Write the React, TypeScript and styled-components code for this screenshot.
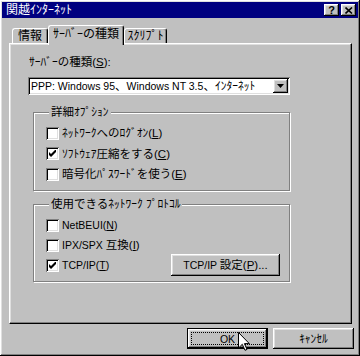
import styled, { createGlobalStyle } from "styled-components";

const GlobalStyle = createGlobalStyle`
  html, body { margin: 0; padding: 0; background: #c0c0c0; }
  body {
    font-family: "Liberation Sans", "Noto Sans CJK JP", sans-serif;
    font-size: 11.5px;
    color: #000;
  }
`;

const raised = `
  box-shadow: inset -1px -1px #000, inset 1px 1px #fff, inset -2px -2px #808080, inset 2px 2px #dfdfdf;
`;
const sunken = `
  box-shadow: inset 1px 1px #808080, inset -1px -1px #fff, inset 2px 2px #000, inset -2px -2px #dfdfdf;
`;

const Window = styled.div`
  width: 360px;
  height: 356px;
  box-sizing: border-box;
  padding: 2px;
  background: #c0c0c0;
  ${raised}
  display: flex;
  flex-direction: column;
`;

const TitleBar = styled.div`
  height: 16px;
  display: flex;
  align-items: center;
  padding: 0 2px;
  background: #000080;
  color: #fff;
`;

const Title = styled.span`
  margin-left: 2px;
  line-height: 14px;
  font-size: 12px;
`;

const CaptionButtons = styled.div`
  margin-left: auto;
  display: flex;
  gap: 2px;
`;

const CapButton = styled.div`
  width: 15px;
  height: 12px;
  box-sizing: border-box;
  background: #c0c0c0;
  ${raised}
  color: #000;
  display: flex;
  align-items: center;
  justify-content: center;
  font-weight: bold;
  font-size: 11px;
  line-height: 10px;
`;

const TabRow = styled.div`
  height: 25px;
  display: flex;
  align-items: flex-end;
  padding-left: 10px;
`;

const Tab = styled.div<{ $active?: boolean; $w: number }>`
  position: relative;
  z-index: 1;
  width: ${(p) => p.$w}px;
  height: ${(p) => (p.$active ? 20 : 15)}px;
  margin-bottom: ${(p) => (p.$active ? -2 : 0)}px;
  padding-bottom: ${(p) => (p.$active ? 3 : 0)}px;
  box-sizing: border-box;
  background: #c0c0c0;
  border-top: 1px solid #fff;
  border-left: 1px solid #fff;
  border-right: 1px solid #000;
  border-radius: 3px 3px 0 0;
  box-shadow: inset -1px 0 #808080;
  display: flex;
  align-items: center;
  justify-content: center;
  line-height: 14px;
  font-size: 12px;
`;

const Panel = styled.div`
  margin-left: 7px;
  width: 343px;
  height: 281px;
  box-sizing: border-box;
  border-top: 1px solid #fff;
  border-left: 1px solid #fff;
  border-right: 1px solid #000;
  border-bottom: 1px solid #000;
  box-shadow: inset -1px -1px #808080, inset 1px 1px #dfdfdf;
  padding: 11px 0 0 19px;
  display: flex;
  flex-direction: column;
`;

const Label = styled.div`
  height: 14px;
  line-height: 14px;
`;

// latin runs are set narrower than the kana, as in the old bitmap UI font
const Roman = styled.span`
  font-size: 10.5px;
`;

const Combo = styled.div`
  margin: 8px 0 0 -1px;
  width: 262px;
  height: 18px;
  box-sizing: border-box;
  background: #fff;
  ${sunken}
  display: flex;
  align-items: center;
  padding: 0 2px 0 3px;
  line-height: 14px;
  white-space: nowrap;
`;

const DropButton = styled.div`
  margin-left: auto;
  width: 15px;
  height: 14px;
  box-sizing: border-box;
  background: #c0c0c0;
  ${raised}
  display: flex;
  align-items: center;
  justify-content: center;
`;

const Group = styled.fieldset<{ $top: number; $h: number }>`
  margin: ${(p) => p.$top}px 0 0 4px;
  width: 257px;
  height: ${(p) => p.$h}px;
  box-sizing: border-box;
  padding: 4px 9px 0 12px;
  border: 1px solid #808080;
  box-shadow: 1px 1px #fff, inset 1px 1px #fff;
  min-inline-size: 0;
`;

const Legend = styled.legend`
  margin-left: 3px;
  padding: 0 2px;
  background: #c0c0c0;
  line-height: 14px;
  height: 14px;
`;

const Row = styled.div<{ $h: number }>`
  height: ${(p) => p.$h}px;
  display: flex;
  align-items: center;
  line-height: 14px;
  white-space: nowrap;
`;

const Box = styled.span`
  width: 13px;
  height: 13px;
  box-sizing: border-box;
  background: #fff;
  ${sunken}
  margin-right: 3px;
  display: flex;
  align-items: center;
  justify-content: center;
  flex: none;
`;

const SideButton = styled.div`
  margin-left: auto;
  width: 109px;
  height: 22px;
  box-sizing: border-box;
  background: #c0c0c0;
  ${raised}
  display: flex;
  align-items: center;
  justify-content: center;
  line-height: 14px;
  white-space: pre;
`;

const ButtonRow = styled.div`
  margin-top: 4px;
  display: flex;
  justify-content: flex-end;
  gap: 5px;
  padding-right: 4px;
`;

const DialogButton = styled.div<{ $default?: boolean }>`
  position: relative;
  width: 81px;
  height: 21px;
  box-sizing: border-box;
  background: #c0c0c0;
  border: ${(p) => (p.$default ? "1px solid #000" : "none")};
  ${raised}
  padding: ${(p) => (p.$default ? "3px" : "0")};
  display: flex;
  line-height: 14px;
`;

const ButtonFace = styled.span<{ $focus?: boolean }>`
  flex: 1;
  display: flex;
  align-items: center;
  justify-content: center;
  border: ${(p) => (p.$focus ? "1px dotted #000" : "none")};
`;

const Cursor = styled.svg`
  position: absolute;
  left: 50px;
  top: 3px;
`;

function Check({ checked }: { checked?: boolean }) {
  return (
    <Box>
      {checked && (
        <svg width="7" height="7" viewBox="0 0 7 7">
          <path d="M0 2 L2 4 L6 0 L7 0 L7 2 L2 7 L0 5 Z" fill="#000" />
        </svg>
      )}
    </Box>
  );
}

export default function App() {
  return (
    <>
      <GlobalStyle />
      <Window>
        <TitleBar>
          <Title>関越ｲﾝﾀｰﾈｯﾄ</Title>
          <CaptionButtons>
            <CapButton>?</CapButton>
            <CapButton>
              <svg width="8" height="7" viewBox="0 0 8 7">
                <path d="M0.5 0.5 L7 6.5 M7 0.5 L0.5 6.5" stroke="#000" strokeWidth="1.6" />
              </svg>
            </CapButton>
          </CaptionButtons>
        </TitleBar>

        <TabRow>
          <Tab $w={36}>情報</Tab>
          <Tab $w={76} $active>
            ｻｰﾊﾞｰの種類
          </Tab>
          <Tab $w={43}>ｽｸﾘﾌﾟﾄ</Tab>
        </TabRow>

        <Panel>
          <Label>
            ｻｰﾊﾞｰの種類(<u>S</u>):
          </Label>
          <Combo>
            <Roman>PPP: Windows 95</Roman>、<Roman>Windows NT 3.5</Roman>、ｲﾝﾀｰﾈｯﾄ
            <DropButton>
              <svg width="7" height="4" viewBox="0 0 7 4">
                <path d="M0 0 H7 L3.5 4 Z" fill="#000" />
              </svg>
            </DropButton>
          </Combo>

          <Group $top={10} $h={86}>
            <Legend>詳細ｵﾌﾟｼｮﾝ</Legend>
            <Row $h={20.5}>
              <Check />
              ﾈｯﾄﾜｰｸへのﾛｸﾞｵﾝ(<u>L</u>)
            </Row>
            <Row $h={20.5}>
              <Check checked />
              ｿﾌﾄｳｪｱ圧縮をする(<u>C</u>)
            </Row>
            <Row $h={20.5}>
              <Check />
              暗号化ﾊﾟｽﾜｰﾄﾞを使う(<u>E</u>)
            </Row>
          </Group>

          <Group $top={6} $h={85}>
            <Legend>使用できるﾈｯﾄﾜｰｸ ﾌﾟﾛﾄｺﾙ</Legend>
            <Row $h={20}>
              <Check />
              <Roman>
                NetBEUI(<u>N</u>)
              </Roman>
            </Row>
            <Row $h={20}>
              <Check />
              <Roman>{"IPX/SPX\u00a0"}</Roman>互換(<u>I</u>)
            </Row>
            <Row $h={20}>
              <Check checked />
              <Roman>
                TCP/IP(<u>T</u>)
              </Roman>
              <SideButton>
                <Roman>TCP/IP </Roman>設定(<u>P</u>)...
              </SideButton>
            </Row>
          </Group>
        </Panel>

        <ButtonRow>
          <DialogButton $default>
            <ButtonFace $focus>
              <Roman>OK</Roman>
            </ButtonFace>
            <Cursor width="12" height="19" viewBox="0 0 12 19">
              <path
                d="M0.5 0.5 L0.5 16 L4.3 12.3 L7 18.3 L9 17.4 L6.4 11.6 L11.3 11.6 Z"
                fill="#fff"
                stroke="#000"
                strokeWidth="1"
              />
            </Cursor>
          </DialogButton>
          <DialogButton>
            <ButtonFace>ｷｬﾝｾﾙ</ButtonFace>
          </DialogButton>
        </ButtonRow>
      </Window>
    </>
  );
}
